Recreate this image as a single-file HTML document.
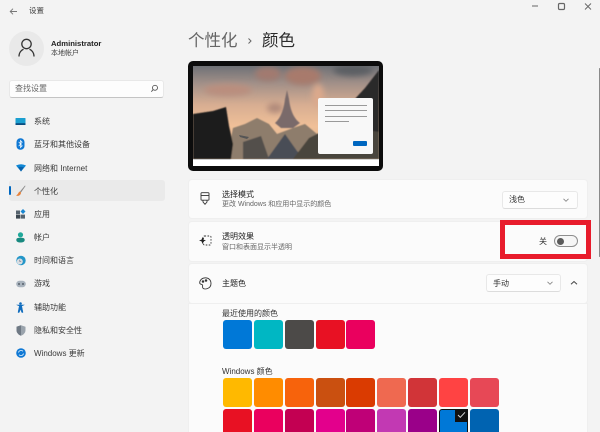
<!DOCTYPE html>
<html lang="zh"><head><meta charset="utf-8"><title>设置</title>
<style>
html,body{margin:0;padding:0;background:#f3f3f3;width:600px;height:432px;overflow:hidden}
body{font-family:"Liberation Sans","Noto Sans CJK SC",sans-serif;color:#333}
#w{position:absolute;left:0;top:0;width:600px;height:432px;overflow:hidden;filter:blur(.25px)}
.t{position:absolute;white-space:nowrap;line-height:12px}
.n{font-size:8px;left:34px;color:#3a3a3a}
.i{position:absolute}
.c{position:absolute;left:189px;width:398px;background:#fbfbfb;border-radius:3px;box-shadow:0 0 0 1px #efefef}
.s{position:absolute;width:29px;height:29px;border-radius:3px}
.d{position:absolute;background:#fdfdfd;border:1px solid #e8e8e8;border-bottom-color:#dcdcdc;border-radius:3px;box-sizing:border-box}
.l{position:absolute;height:1px;background:#9a9a9a}
</style></head><body><div id="w">

<!-- title bar -->
<svg class="i" style="left:9px;top:6.500px" width="9" height="9" viewBox="0 0 9 9" fill="none" stroke="#777" stroke-width=".9"><path d="M8 4.500H1.200M4 1.700L1.200 4.500 4 7.300"/></svg>
<div class="t" style="left:29px;top:5px;font-size:7.500px;color:#444">设置</div>
<svg class="i" style="left:530px;top:2px" width="62" height="11" viewBox="0 0 62 11" fill="none" stroke="#666" stroke-width="1"><path d="M2 4H8"/><rect x="28.500" y="1.500" width="6" height="6" rx="1.200" stroke-width="1.200"/><path d="M55 1.500L61 7.500M61 1.500L55 7.500" stroke-width=".9"/></svg>

<!-- user -->
<div class="i" style="left:9px;top:31px;width:35px;height:35px;border-radius:50%;background:#e9e9e9"></div>
<svg class="i" style="left:16px;top:37px" width="21" height="22" viewBox="0 0 21 22" fill="none" stroke="#333" stroke-width="1.300"><circle cx="10.500" cy="7" r="4.700"/><path d="M3 19.500C3 15 6 12.800 7.500 12.300M18 19.500C18 15 15 12.800 13.500 12.300"/></svg>
<div class="t" style="left:51px;top:38px;font-size:7.700px;font-weight:bold;color:#222">Administrator</div>
<div class="t" style="left:51px;top:48px;font-size:7px;color:#444">本地帐户</div>

<!-- search -->
<div class="d" style="left:9px;top:80px;width:155px;height:17.500px;border-bottom:1px solid #c4c4c4"></div>
<div class="t" style="left:15px;top:83px;font-size:8px;color:#666">查找设置</div>
<svg class="i" style="left:150px;top:84px" width="9" height="9" viewBox="0 0 9 9" fill="none" stroke="#555" stroke-width=".9"><circle cx="5" cy="3.800" r="2.500"/><path d="M3.200 5.600L1.300 7.700"/></svg>

<!-- nav -->
<div class="i" style="left:9px;top:180px;width:156px;height:21px;background:#eaeaea;border-radius:3px"></div>
<div class="i" style="left:9px;top:186px;width:1.500px;height:9px;background:#0067c0;border-radius:1px"></div>

<svg class="i" style="left:15px;top:117px" width="11" height="9" viewBox="0 0 11 9"><rect x=".500" y="1" width="10" height="7" rx=".5" fill="#1b9fd0"/><rect x=".500" y="6.200" width="10" height="1.800" fill="#0a4d80"/></svg>
<div class="t n" style="top:116px">系统</div>

<svg class="i" style="left:16px;top:138px" width="9" height="12" viewBox="0 0 9 12"><rect x=".500" y=".200" width="8" height="11.600" rx="3.800" fill="#0f78d4"/><path d="M2.700 3.900L6.200 7.800 4.500 9.500V2.500L6.200 4.200 2.700 8.100" fill="none" stroke="#fff" stroke-width=".7"/></svg>
<div class="t n" style="top:139px">蓝牙和其他设备</div>

<svg class="i" style="left:15.500px;top:164px" width="10" height="8" viewBox="0 0 10 8"><path d="M0 1.500Q5 -1 10 1.500L5 7.500Z" fill="#0e86d4"/><path d="M2.300 3.500Q5 2.300 7.700 3.500L5 7.500Z" fill="#0a5fa8"/></svg>
<div class="t n" style="top:163px">网络和 Internet</div>

<svg class="i" style="left:15px;top:185px" width="11" height="12" viewBox="0 0 11 12"><path d="M10 .5L5 6.500 6 7.500 10.500 1Z" fill="#8a8a8a"/><path d="M5 6.500C3 7 3.500 9.500 1 10.500 3 11.500 6 10.500 6 7.500Z" fill="#e8823a"/></svg>
<div class="t n" style="top:186px">个性化</div>

<svg class="i" style="left:16px;top:209px" width="10" height="10" viewBox="0 0 10 10"><rect x="0" y="1.500" width="4" height="3.600" fill="#56636e"/><rect x="0" y="5.600" width="4" height="4" fill="#3c4750"/><rect x="4.500" y="5.600" width="4.500" height="4" fill="#56636e"/><path d="M7 0L9.500 2.500 7 5 4.500 2.500Z" fill="#1a86d0"/></svg>
<div class="t n" style="top:209px">应用</div>

<svg class="i" style="left:16px;top:232px" width="9" height="11" viewBox="0 0 9 11"><circle cx="4.500" cy="2.800" r="2.600" fill="#20a89a"/><path d="M.3 8C.3 6 2 5.800 4.500 5.800S8.700 6 8.700 8C8.700 10 6.500 10.500 4.500 10.500S.3 10 .3 8Z" fill="#18897f"/></svg>
<div class="t n" style="top:232px">帐户</div>

<svg class="i" style="left:16px;top:255px" width="10" height="11" viewBox="0 0 10 11"><circle cx="5" cy="5.500" r="4.700" fill="#2496c8"/><circle cx="3.800" cy="6.500" r="3" fill="#d8dde2"/><path d="M3.800 4.800V6.500H5.200" stroke="#667" stroke-width=".6" fill="none"/></svg>
<div class="t n" style="top:255px">时间和语言</div>

<svg class="i" style="left:15.500px;top:280px" width="10" height="8" viewBox="0 0 10 8"><rect x=".2" y=".8" width="9.600" height="6.400" rx="3.200" fill="#a9b3bd"/><circle cx="3" cy="4" r="1" fill="#56616c"/><circle cx="7" cy="4" r="1" fill="#56616c"/></svg>
<div class="t n" style="top:278px">游戏</div>

<svg class="i" style="left:16px;top:302px" width="9" height="11" viewBox="0 0 9 11"><circle cx="4.500" cy="1.500" r="1.300" fill="#0f6cbd"/><path d="M.6 2.800L3.300 4 2 10.500H3.200L4.500 7 5.800 10.500H7L5.700 4 8.400 2.800" fill="#0f6cbd" stroke="#0f6cbd" stroke-width=".5"/></svg>
<div class="t n" style="top:302px">辅助功能</div>

<svg class="i" style="left:16px;top:325px" width="10" height="11" viewBox="0 0 10 11"><path d="M5 .3L9.500 1.800V5.200C9.500 8 7 10 5 10.700 3 10 .5 8 .5 5.200V1.800Z" fill="#9aa3ac"/><path d="M5 .3V10.700C3 10 .5 8 .5 5.200V1.800Z" fill="#6f7984"/></svg>
<div class="t n" style="top:325px">隐私和安全性</div>

<svg class="i" style="left:15.500px;top:348px" width="10" height="10" viewBox="0 0 10 10"><circle cx="5" cy="5" r="4.800" fill="#0f78d4"/><path d="M2.500 4.500A2.600 2.600 0 0 1 7 3.300M7.500 5.500A2.600 2.600 0 0 1 3 6.700" fill="none" stroke="#dff0fb" stroke-width=".8"/></svg>
<div class="t n" style="top:348px;font-size:8px">Windows 更新</div>

<!-- header -->
<div class="t" style="left:188px;top:31px;font-size:16.500px;line-height:20px;color:#666">个性化</div>
<svg class="i" style="left:247px;top:36px" width="6" height="10" viewBox="0 0 6 10" fill="none" stroke="#666" stroke-width="1"><path d="M1.500 2.500L4 5 1.500 7.500"/></svg>
<div class="t" style="left:262px;top:31px;font-size:16.500px;line-height:20px;color:#2b2b2b">颜色</div>

<!-- preview -->
<div class="i" style="left:188px;top:61px;width:195px;height:110px;background:#0c0c0c;border-radius:5px"></div>
<svg class="i" style="left:193px;top:66px" width="186" height="100" viewBox="0 0 186 100">
<defs>
<linearGradient id="sky" x1="0" y1="0" x2="0" y2="1"><stop offset="0" stop-color="#6e7176"/><stop offset=".18" stop-color="#a08f88"/><stop offset=".42" stop-color="#d8ae92"/><stop offset=".65" stop-color="#f0c098"/><stop offset="1" stop-color="#d4b090"/></linearGradient>
<filter id="b"><feGaussianBlur stdDeviation="3"/></filter>
<filter id="b1"><feGaussianBlur stdDeviation=".6"/></filter>
</defs>
<rect width="186" height="100" fill="#fff"/>
<rect width="186" height="93" fill="url(#sky)"/>
<g filter="url(#b)">
<ellipse cx="75" cy="8" rx="13" ry="7" fill="#a27a70"/>
<ellipse cx="110" cy="10" rx="18" ry="9" fill="#a87a6c"/>
<ellipse cx="35" cy="24" rx="24" ry="6" fill="#ba8e7e"/>
<ellipse cx="82" cy="42" rx="8" ry="5" fill="#b08a7a"/>
<ellipse cx="160" cy="4" rx="20" ry="6" fill="#5c5f64"/>
<ellipse cx="125" cy="30" rx="6" ry="12" fill="#dba98c"/>
</g>
<g filter="url(#b1)">
<path d="M34 93L40 62 52 58 64 52 76 58 84 68 100 62 112 58 124 68 186 56V93Z" fill="#8e7d6c"/>
<path d="M82 57C88 52 91 42 92 33L94 24 96 33C97 42 100 52 107 57L100 62H88Z" fill="#7a6a6a"/>
<path d="M50 93V76L68 70 76 93Z" fill="#524f4c"/>
<path d="M74 93L92 68 104 85 112 93Z" fill="#4a4e56"/>
<path d="M100 93L116 72 136 62 186 58V93Z" fill="#4a443c"/>
<path d="M0 48L20 45 33 41 36 60 40 78 38 93H0Z" fill="#1c1a1c"/>
<path d="M186 4V66L165 62 159 36 172 22Z" fill="#2a292b"/>
</g>
<path d="M46 69L56 71 54 73 47 71Z" fill="#555"/>
</svg>
<div class="i" style="left:318px;top:98px;width:55px;height:56px;background:#f8f8f8;border-radius:2px">
<div class="l" style="left:7px;top:6.500px;width:42px"></div>
<div class="l" style="left:7px;top:12px;width:42px"></div>
<div class="l" style="left:7px;top:17.500px;width:42px"></div>
<div class="l" style="left:7px;top:22.500px;width:24px"></div>
<div class="i" style="left:35px;top:43px;width:14px;height:4.500px;background:#0067c0;border-radius:1px"></div>
</div>

<!-- cards -->
<div class="c" style="top:180px;height:38px"></div>
<div class="c" style="top:222px;height:39px"></div>
<div class="c" style="top:264px;height:39px"></div>
<div class="c" style="top:304px;height:128px;border-radius:0"></div>

<svg class="i" style="left:200px;top:192px" width="10" height="13" viewBox="0 0 10 13" fill="none" stroke="#333" stroke-width=".9"><rect x="1" y=".7" width="8" height="7.500" rx=".8"/><path d="M1 3.500H9" /><path d="M3 8.200V10L5 12.300 7 10V8.200"/></svg>
<div class="t" style="left:222px;top:189px;font-size:8px;color:#222">选择模式</div>
<div class="t" style="left:222px;top:199px;font-size:7px;color:#666">更改 Windows 和应用中显示的颜色</div>
<div class="d" style="left:502px;top:191px;width:76px;height:18px"></div>
<div class="t" style="left:509px;top:194px;font-size:8px;color:#333">浅色</div>
<svg class="i" style="left:562px;top:196px" width="8" height="8" viewBox="0 0 8 8" fill="none" stroke="#888" stroke-width=".9"><path d="M1.500 2.800L4 5.300 6.500 2.800"/></svg>

<svg class="i" style="left:199px;top:235px" width="13" height="11" viewBox="0 0 13 11" fill="none"><path d="M3.500 1.800L4.400 4.600 7 5.500 4.400 6.400 3.500 9.200 2.600 6.400 0 5.500 2.600 4.600Z" fill="#222"/><rect x="4.500" y="1" width="7.500" height="9" rx="1" stroke="#333" stroke-width=".9" stroke-dasharray="1.600 1.400"/></svg>
<div class="t" style="left:222px;top:231px;font-size:8px;color:#222">透明效果</div>
<div class="t" style="left:222px;top:242px;font-size:7px;color:#666">窗口和表面显示半透明</div>
<div class="t" style="left:539px;top:236px;font-size:8px;color:#333">关</div>
<div class="i" style="left:554px;top:235px;width:24px;height:12px;box-sizing:border-box;border:1px solid #8e8e8e;border-radius:6px;background:#f6f6f6"></div>
<div class="i" style="left:556.500px;top:237.500px;width:7px;height:7px;border-radius:50%;background:#5a5a5a"></div>

<!-- red box -->
<div class="i" style="left:500px;top:220px;width:90.500px;height:39px;box-sizing:border-box;border:5px solid #e81c2c"></div>

<svg class="i" style="left:199px;top:277px" width="13" height="13" viewBox="0 0 13 13" fill="none" stroke="#333" stroke-width=".9"><path d="M6.500 .8C3 .8 .7 3.200 .7 5.800 .7 7.800 3 7 3.500 8 4 9.200 3 10 4 11.200 5.500 12.800 12 12 12 6.500 12 3 9.500 .8 6.500 .8Z"/><circle cx="4" cy="4.500" r=".8" fill="#333"/><circle cx="7" cy="3.500" r=".8" fill="#333"/></svg>
<div class="t" style="left:222px;top:278px;font-size:8px;color:#222">主题色</div>
<div class="d" style="left:486px;top:274px;width:75px;height:18px"></div>
<div class="t" style="left:493px;top:278px;font-size:8px;color:#333">手动</div>
<svg class="i" style="left:546px;top:279px" width="8" height="8" viewBox="0 0 8 8" fill="none" stroke="#888" stroke-width=".9"><path d="M1.500 2.800L4 5.300 6.500 2.800"/></svg>
<svg class="i" style="left:569px;top:279px" width="9" height="8" viewBox="0 0 8 8" fill="none" stroke="#444" stroke-width="1"><path d="M1.500 5.300L4.500 2.500 7.500 5.300"/></svg>

<div class="t" style="left:222px;top:308px;font-size:8px;color:#333">最近使用的颜色</div>
<div class="s" style="left:223px;top:319.500px;background:#0078d7"></div>
<div class="s" style="left:254px;top:319.500px;background:#00b7c3"></div>
<div class="s" style="left:285px;top:319.500px;background:#4c4a48"></div>
<div class="s" style="left:315.500px;top:319.500px;background:#e81123"></div>
<div class="s" style="left:346px;top:319.500px;background:#ea005e"></div>

<div class="t" style="left:222px;top:366px;font-size:8px;color:#333">Windows 颜色</div>
<div class="s" style="left:223px;top:378px;background:#ffb900"></div>
<div class="s" style="left:254px;top:378px;background:#ff8c00"></div>
<div class="s" style="left:285px;top:378px;background:#f7630c"></div>
<div class="s" style="left:315.500px;top:378px;background:#ca5010"></div>
<div class="s" style="left:346px;top:378px;background:#da3b01"></div>
<div class="s" style="left:377px;top:378px;background:#ef6950"></div>
<div class="s" style="left:408px;top:378px;background:#d13438"></div>
<div class="s" style="left:439px;top:378px;background:#ff4343"></div>
<div class="s" style="left:470px;top:378px;background:#e74856"></div>

<div class="s" style="left:223px;top:409px;background:#e81123"></div>
<div class="s" style="left:254px;top:409px;background:#ea005e"></div>
<div class="s" style="left:285px;top:409px;background:#c30052"></div>
<div class="s" style="left:315.500px;top:409px;background:#e3008c"></div>
<div class="s" style="left:346px;top:409px;background:#bf0077"></div>
<div class="s" style="left:377px;top:409px;background:#c239b3"></div>
<div class="s" style="left:408px;top:409px;background:#9a0089"></div>
<div class="s" style="left:439px;top:408.500px;background:#0078d7;box-sizing:border-box;border:1.500px solid #111;width:29px;height:30px"></div>
<div class="i" style="left:455px;top:408.500px;width:13px;height:13px;background:#111"></div>
<svg class="i" style="left:456px;top:410px" width="11" height="10" viewBox="0 0 11 10" fill="none" stroke="#ddd" stroke-width=".9"><path d="M2 5L4.300 7.300 9 2.300"/></svg>
<div class="s" style="left:470px;top:409px;background:#0063b1"></div>

<!-- scrollbar -->
<div class="i" style="left:598.500px;top:68px;width:1.500px;height:189px;background:#8a8a8a;border-radius:1px"></div>

</div></body></html>
